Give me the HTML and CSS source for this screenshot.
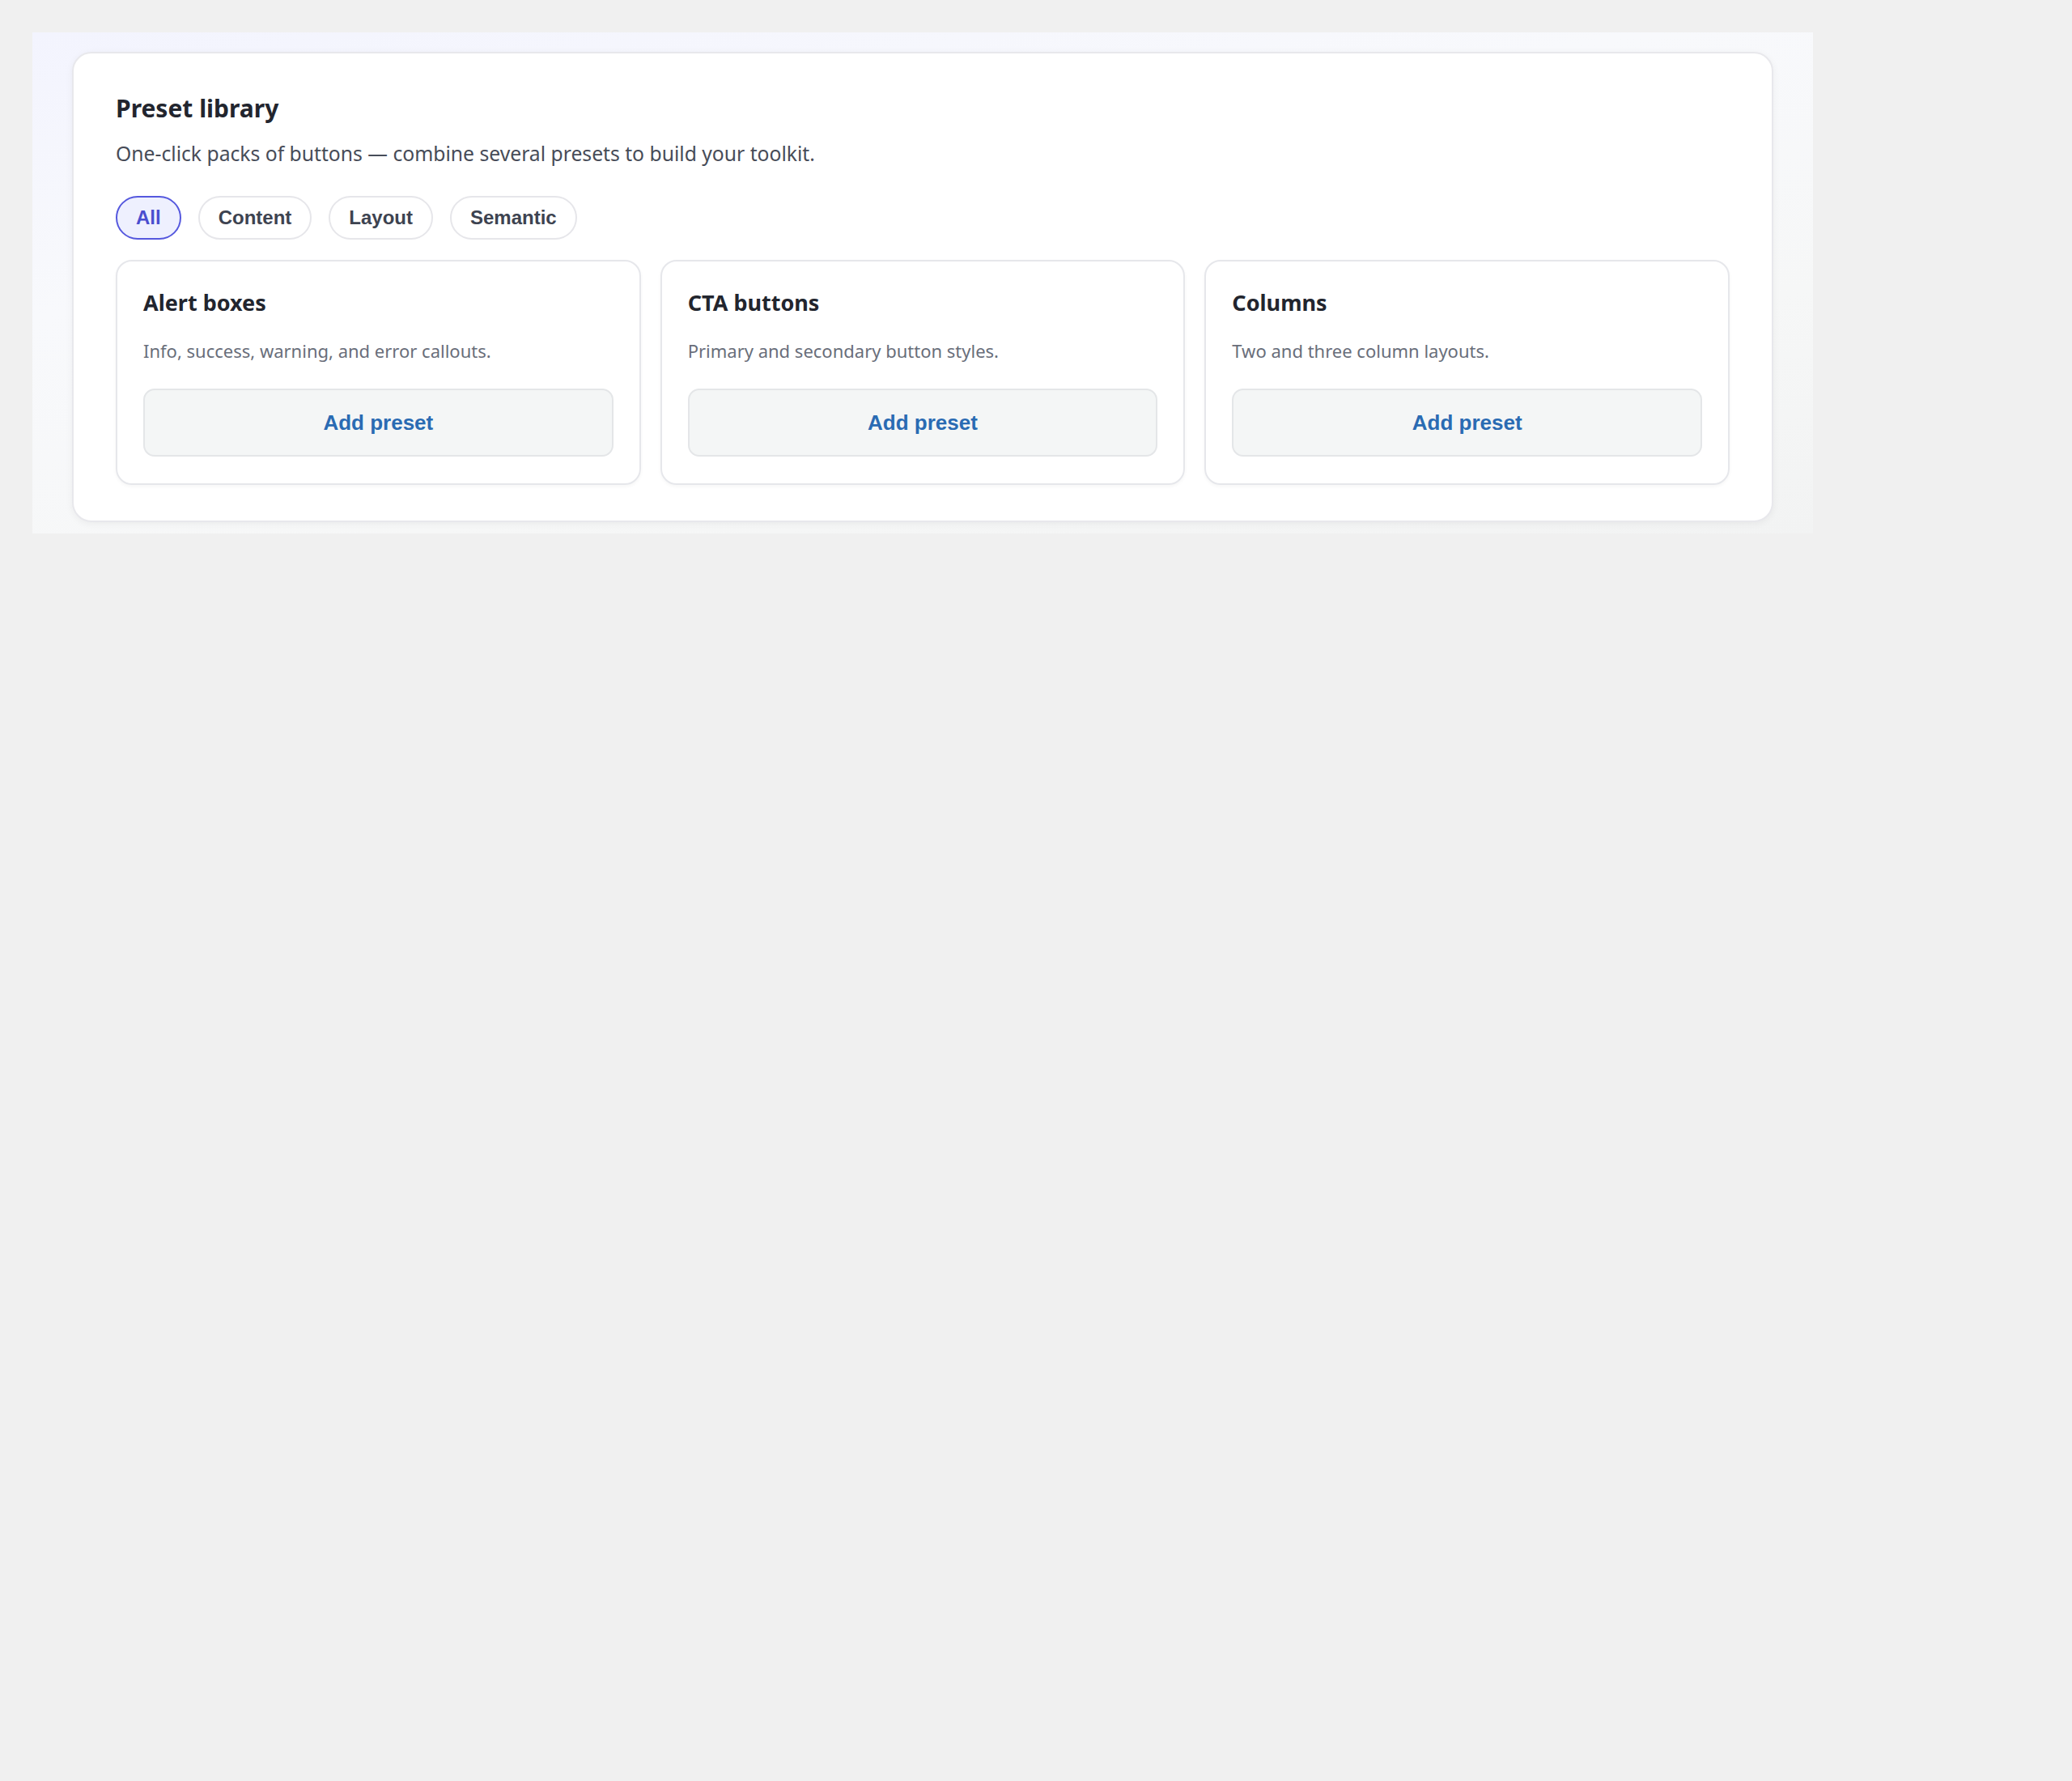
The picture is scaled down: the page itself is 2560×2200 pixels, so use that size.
FILE: index.html
```html
<!DOCTYPE html>
<html lang="en">
<head>
  <meta charset="UTF-8" />
  <meta name="viewport" content="width=device-width, initial-scale=1.0" />
  <title>Preset library</title>
  <link rel="stylesheet" href="styles.css">
</head>
<body>
  <div class="page">
    <section class="library">
      <h1>Preset library</h1>
      <p class="lead">One-click packs of buttons — combine several presets to build your toolkit.</p>

      <div class="filters">
        <button type="button" class="pill pill-active">All</button>
        <button type="button" class="pill">Content</button>
        <button type="button" class="pill">Layout</button>
        <button type="button" class="pill">Semantic</button>
      </div>

      <div class="presets">
        <div class="preset">
          <h2>Alert boxes</h2>
          <p>Info, success, warning, and error callouts.</p>
          <button type="button" class="add-btn">Add preset</button>
        </div>
        <div class="preset">
          <h2>CTA buttons</h2>
          <p>Primary and secondary button styles.</p>
          <button type="button" class="add-btn">Add preset</button>
        </div>
        <div class="preset">
          <h2>Columns</h2>
          <p>Two and three column layouts.</p>
          <button type="button" class="add-btn">Add preset</button>
        </div>
      </div>
    </section>
  </div>
</body>
</html>
```

FILE: styles.css
```css
body {
  margin: 0;
  padding: 40px;
  background-color: #f0f0f0;
  font-family: "Noto Sans", sans-serif;
}
.page {
  width: 2200px;
  box-sizing: border-box;
  padding: 24px 49px 14px;
  background: linear-gradient(170deg, #f3f4fe 0%, #f8f9fc 35%, #f6f7f7 70%, #f2f3f3 100%);
}
.library {
  background: white;
  border: 2px solid #e8e8ec;
  border-radius: 24px;
  padding: 48px 52px 44px;
  box-shadow: 0 2px 10px rgba(0,0,0,0.05);
}
h1 {
  margin: 0;
  font-size: 30px;
  line-height: 40px;
  font-weight: 700;
  color: #22252e;
}
.lead {
  margin: 18px 0 0;
  font-size: 24.7px;
  line-height: 36px;
  color: #474c58;
}
.filters {
  display: flex;
  gap: 21px;
  margin-top: 34px;
}
.pill {
  font-family: "Liberation Sans", Arial, sans-serif;
  font-size: 24px;
  font-weight: 700;
  line-height: 28px;
  padding: 11px 23px;
  border: 2px solid #e6e6ea;
  border-radius: 999px;
  background: white;
  color: #3d4350;
}
.pill-active {
  background: #eef0fe;
  border-color: #5558de;
  color: #4a4ecf;
}
.presets {
  display: grid;
  grid-template-columns: repeat(3, 1fr);
  gap: 24px;
  margin-top: 25px;
}
.preset {
  border: 2px solid #e6e7eb;
  border-radius: 20px;
  padding: 33px 32px 33px;
  box-shadow: 0 2px 4px rgba(0,0,0,0.04);
}
.preset h2 {
  margin: 0;
  font-size: 27px;
  line-height: 35px;
  font-weight: 700;
  color: #22252e;
}
.preset p {
  margin: 26px 0 0;
  font-size: 22px;
  line-height: 32px;
  color: #696e7a;
}
.add-btn {
  display: block;
  width: 100%;
  height: 84px;
  margin-top: 31px;
  font-family: "Liberation Sans", Arial, sans-serif;
  font-size: 26px;
  font-weight: 700;
  color: #2a6bb3;
  background: #f4f6f6;
  border: 2px solid #e4e6e8;
  border-radius: 14px;
}
```
